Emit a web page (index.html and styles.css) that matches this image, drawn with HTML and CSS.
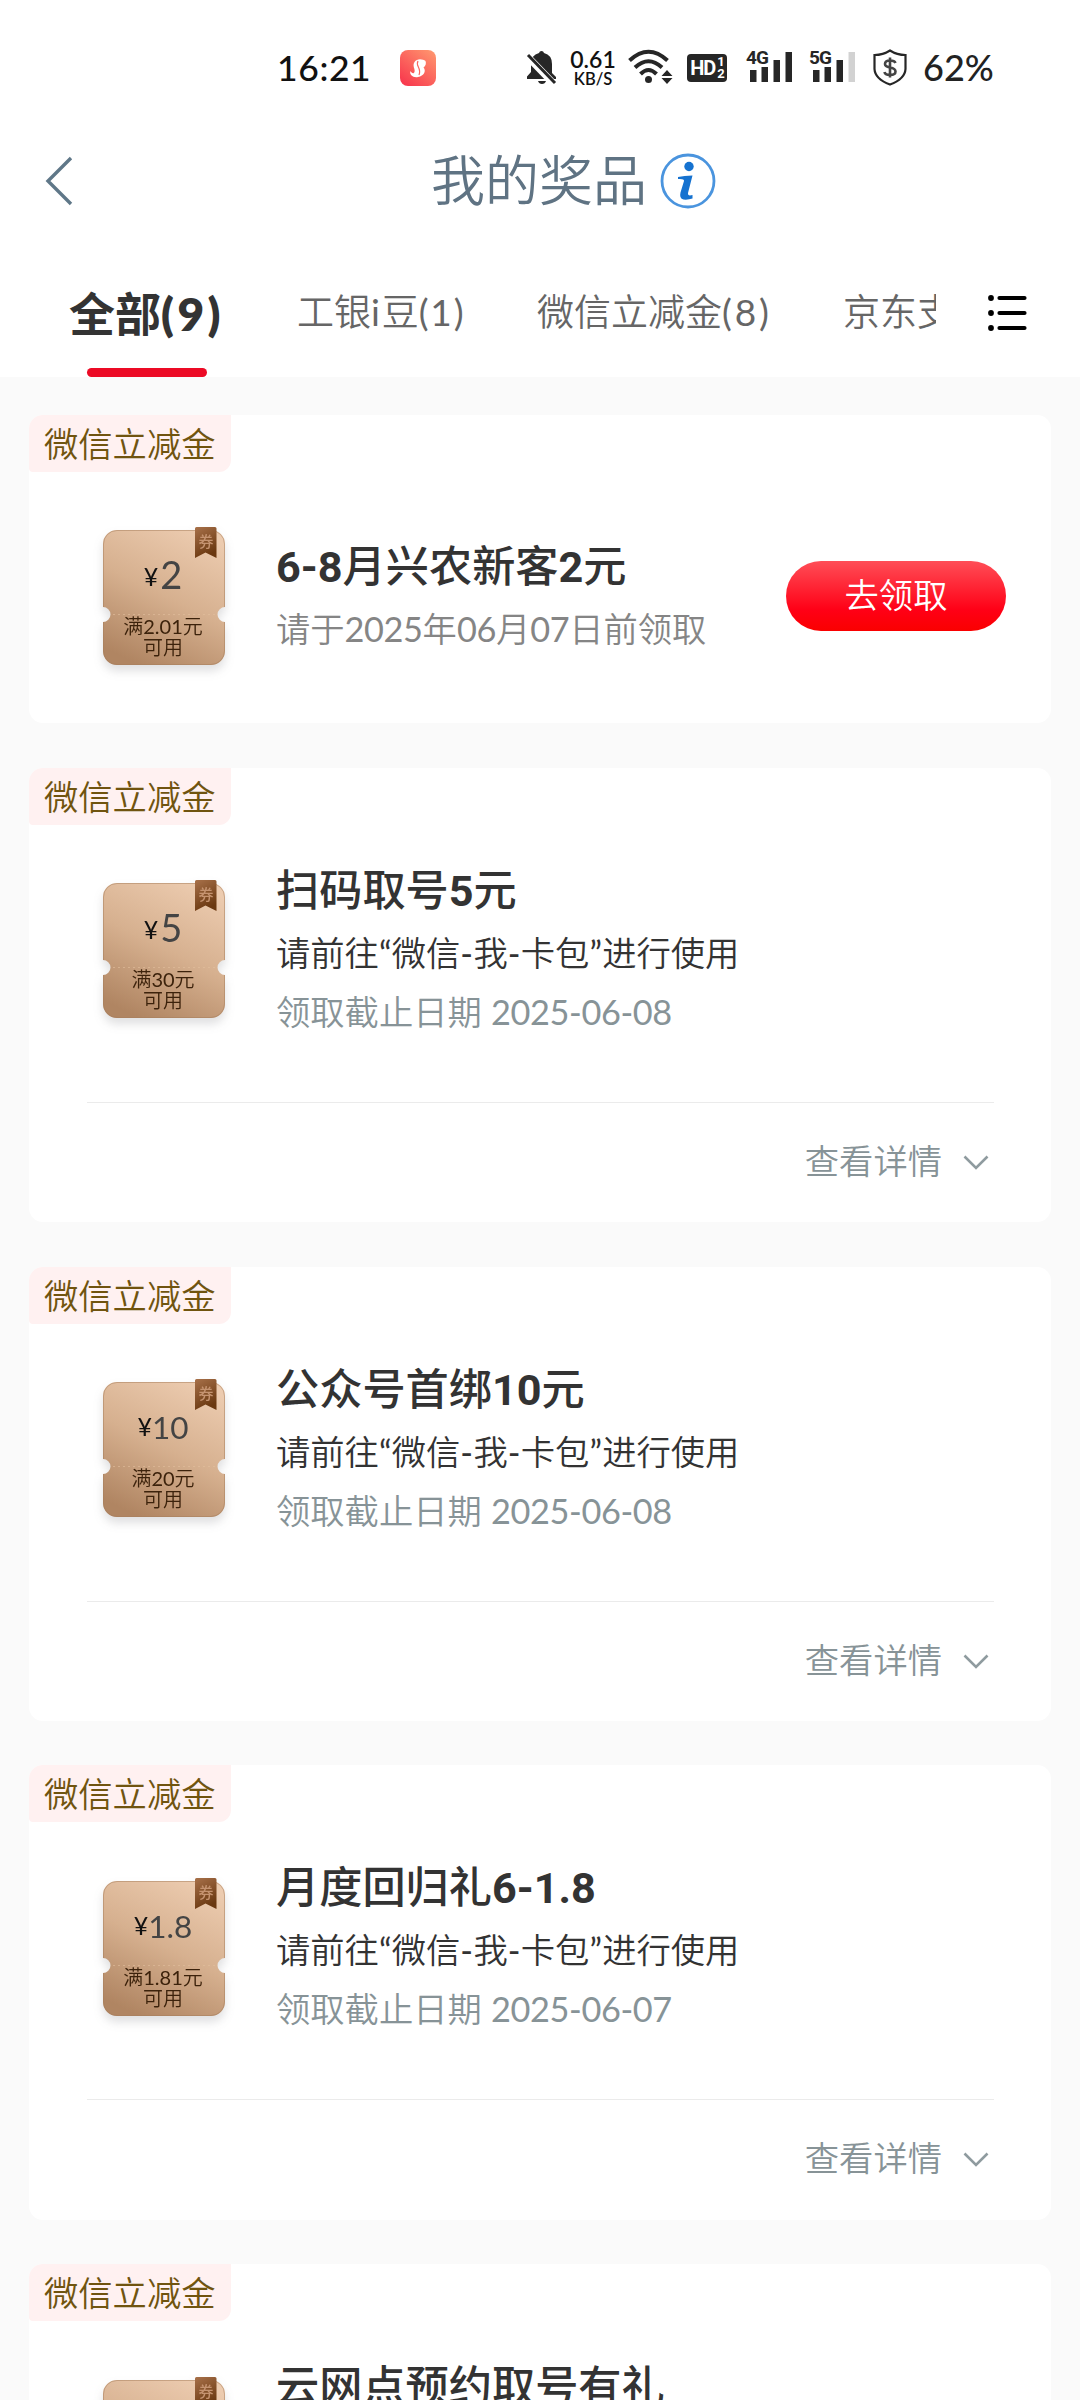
FILE: index.html
```html
<!DOCTYPE html>
<html lang="zh-CN">
<head>
<meta charset="utf-8">
<title>我的奖品</title>
<link rel="stylesheet" href="styles.css">
</head>
<body>
<svg class="defs" width="0" height="0">
  <defs>
    <linearGradient id="gold" x1="0.75" y1="0" x2="0.3" y2="1">
      <stop offset="0" stop-color="#eccbaf"/><stop offset="0.5" stop-color="#d6b08f"/><stop offset="1" stop-color="#b08562"/>
    </linearGradient>
    <linearGradient id="ribbon" x1="0" y1="0" x2="0.4" y2="1">
      <stop offset="0" stop-color="#a8714a"/><stop offset="1" stop-color="#6a3810"/>
    </linearGradient>
    <linearGradient id="app" x1="1" y1="0" x2="0.2" y2="1">
      <stop offset="0" stop-color="#ff9a70"/><stop offset="1" stop-color="#f83a4e"/>
    </linearGradient>
    <symbol id="coupon" viewBox="0 0 122 138">
      <path d="M14 3H108A14 14 0 0 1 122 17V80A7.500 7.500 0 0 0 122 95V124A14 14 0 0 1 108 138H14A14 14 0 0 1 0 124V95A7.500 7.500 0 0 0 0 80V17A14 14 0 0 1 14 3Z" fill="url(#gold)"/>
      <path d="M14 3.500H108A13.500 13.500 0 0 1 121.500 17V80M.5 80V17A13.500 13.500 0 0 1 14 3.500M.5 95V124A13.500 13.500 0 0 0 14 137.500H108A13.500 13.500 0 0 0 121.500 124V95" fill="none" stroke="#a57d5c" stroke-opacity=".5"/>
      <path d="M10 87.500H112" stroke="#e2bf9f" stroke-opacity=".6" stroke-dasharray="2 3"/>
      <path d="M92 1.500Q92 0 93.500 0H112Q113.500 0 113.500 1.500V31L102.500 25.500L92 31Z" fill="url(#ribbon)"/>
    </symbol>
    <symbol id="down" viewBox="0 0 26 16"><path d="M1.500 1.500L13 13L24.500 1.500" fill="none" stroke="#8f9b9f" stroke-width="2.600"/></symbol>
  </defs>
</svg>

<header class="status">
  <span class="clock">16:21</span>
  <svg class="app-icon" width="36" height="36" viewBox="0 0 36 36"><rect width="36" height="36" rx="8" fill="url(#app)"/><path d="M25.500 11C23 9 17 8 14.500 12C12 16 15.500 19 14.500 22C13.500 24.500 11.500 23 10.500 21C9 24.500 13 28 18 27C24 26 26.500 21 23.500 17.500C25.500 16 26.500 13.500 25.500 11Z" fill="#fff"/><path d="M18 11C15 16 22 18 19 25" fill="none" stroke="#f9665f" stroke-width="1.200"/></svg>
  <svg class="bell" width="32" height="35" viewBox="0 0 32 35"><path d="M15.500 1Q17.500 1 18 3Q26 5 26 14V23L30 27V29H1V26.500L5 22V14Q5 5 13 3Q13.500 1 15.500 1ZM12 31H20Q19 34 16 34Q13 34 12 31Z" fill="#262626"/><path d="M-1 4L28 34" stroke="#fff" stroke-width="7"/><path d="M2 5L29 33" stroke="#262626" stroke-width="3"/></svg>
  <span class="speed"><span class="rate">0.61</span><span class="unit">KB/S</span></span>
  <svg class="wifi" width="45" height="36" viewBox="0 0 45 36"><g fill="none" stroke="#262626" stroke-width="4"><path d="M1.500 11.500Q20.500-6 39.500 11.500"/><path d="M7 18.500Q20.500 6 34 18.500"/><path d="M12.500 25Q20.500 17 28.500 25"/></g><circle cx="20.500" cy="30.500" r="3.500" fill="#262626"/><path d="M39 21L44.500 27H33.500ZM39 35L44.500 29H33.500Z" fill="#262626"/></svg>
  <span class="hd"><span>HD</span><span class="hd-n"><i>1</i><i>2</i></span></span>
  <span class="signal"><b>4G</b><svg width="46" height="32" viewBox="0 0 46 32"><path d="M4 20h6.500v12h-6.500zM15.500 17h6.500v15h-6.500zM27.500 10H34v22h-6.500zM39.500 2H46v30h-6.500z" fill="#262626"/></svg></span>
  <span class="signal signal-5g"><b>5G</b><svg width="46" height="32" viewBox="0 0 46 32"><path d="M4 20h6.500v12h-6.500zM15.500 17h6.500v15h-6.500zM27.500 10H34v22h-6.500z" fill="#262626"/><path d="M39.500 2H46v30h-6.500z" fill="#d2d2d2"/></svg></span>
  <svg class="shield" width="34" height="37" viewBox="0 0 34 37"><path d="M17 1.500Q24 6 32.500 6V20Q32 30 17 35.500Q2 30 1.500 20V6Q10 6 17 1.500Z" fill="none" stroke="#262626" stroke-width="2.200"/><path d="M22.500 14Q21.500 11.500 17 11.500Q12 11.500 12 15Q12 17.500 17 18.500Q22.500 19.500 22.500 22.500Q22.500 26 17 26Q12 26 11.500 23M17 8.500V28.500" fill="none" stroke="#444" stroke-width="2.600"/></svg>
  <span class="battery">62%</span>
</header>

<nav class="titlebar">
  <svg class="back" width="28" height="50" viewBox="0 0 28 50"><path d="M26 2L3 25L26 48" fill="none" stroke="#5f7788" stroke-width="3.400"/></svg>
  <h1>我的奖品</h1>
  <svg class="info" width="56" height="56" viewBox="0 0 56 56"><circle cx="28" cy="28" r="26" fill="#fff" stroke="#4a94de" stroke-width="2.800"/><circle cx="29" cy="13.500" r="4.700" fill="#1572d0"/><path d="M18 24Q24 22.500 32.500 22.500L28 40Q27.500 43.500 32.500 42V45.500Q28 47 23.500 46.500Q19 45.500 20.500 39.500L24 28Q24.500 25.500 18 26Z" fill="#1572d0"/></svg>
</nav>

<div class="tabs">
  <div class="tab-strip">
    <span class="tab active">全部<span class="count">(9)</span></span>
    <span class="tab t2">工银<span class="count">i</span>豆<span class="count">(1)</span></span>
    <span class="tab t3">微信立减金<span class="count">(8)</span></span>
    <span class="tab t4">京东支付</span>
  </div>
  <svg class="menu" width="39" height="38" viewBox="0 0 39 38"><g stroke="#000" stroke-width="4.200" stroke-linecap="round"><path d="M11.500 4H36.500M11.500 19H36.500M11.500 34H36.500"/></g><circle cx="3" cy="4" r="2.900"/><circle cx="3" cy="19" r="2.900"/><circle cx="3" cy="34" r="2.900"/></svg>
</div>

<main class="list">
  <article class="card claim">
    <div class="tag">微信立减金</div>
    <div class="body">
      <div class="coupon"><svg><use href="#coupon"/></svg><span class="seal">券</span><p class="amount"><small>¥</small>2</p><p class="rule">满<span class="n">2.01</span>元<br>可用</p></div>
      <div class="text"><h2><b>6-8</b>月兴农新客<b>2</b>元</h2><p class="until">请于<span class="n">2025</span>年<span class="n">06</span>月<span class="n">07</span>日前领取</p></div>
      <span class="button">去领取</span>
    </div>
  </article>

  <article class="card">
    <div class="tag">微信立减金</div>
    <div class="body">
      <div class="coupon"><svg><use href="#coupon"/></svg><span class="seal">券</span><p class="amount"><small>¥</small>5</p><p class="rule">满<span class="n">30</span>元<br>可用</p></div>
      <div class="text"><h2>扫码取号<b>5</b>元</h2><p class="how">请前往<span class="q">“</span>微信<span class="q">-</span>我<span class="q">-</span>卡包<span class="q">”</span>进行使用</p><p class="date">领取截止日期 <span class="n">2025-06-08</span></p></div>
    </div>
    <div class="more">查看详情<svg><use href="#down"/></svg></div>
  </article>

  <article class="card">
    <div class="tag">微信立减金</div>
    <div class="body">
      <div class="coupon"><svg><use href="#coupon"/></svg><span class="seal">券</span><p class="amount long"><small>¥</small>10</p><p class="rule">满<span class="n">20</span>元<br>可用</p></div>
      <div class="text"><h2>公众号首绑<b>10</b>元</h2><p class="how">请前往<span class="q">“</span>微信<span class="q">-</span>我<span class="q">-</span>卡包<span class="q">”</span>进行使用</p><p class="date">领取截止日期 <span class="n">2025-06-08</span></p></div>
    </div>
    <div class="more">查看详情<svg><use href="#down"/></svg></div>
  </article>

  <article class="card">
    <div class="tag">微信立减金</div>
    <div class="body">
      <div class="coupon"><svg><use href="#coupon"/></svg><span class="seal">券</span><p class="amount long"><small>¥</small>1.8</p><p class="rule">满<span class="n">1.81</span>元<br>可用</p></div>
      <div class="text"><h2>月度回归礼<b>6-1.8</b></h2><p class="how">请前往<span class="q">“</span>微信<span class="q">-</span>我<span class="q">-</span>卡包<span class="q">”</span>进行使用</p><p class="date">领取截止日期 <span class="n">2025-06-07</span></p></div>
    </div>
    <div class="more">查看详情<svg><use href="#down"/></svg></div>
  </article>

  <article class="card last">
    <div class="tag">微信立减金</div>
    <div class="body">
      <div class="coupon"><svg><use href="#coupon"/></svg><span class="seal">券</span></div>
      <div class="text"><h2>云网点预约取号有礼</h2></div>
    </div>
  </article>
</main>
</body>
</html>
```
FILE: styles.css
```css
* { box-sizing: border-box; margin: 0; padding: 0; }
html, body { height: 2400px; overflow: hidden; }
body {
  width: 1080px;
  background: #fafafa;
  font-family: Lato, "Noto Sans CJK SC", sans-serif;
  font-weight: 350;
  color: #333;
}
.defs { position: absolute; }
svg { display: block; flex: none; overflow: visible; }

.status { display: flex; height: 136px; padding: 49px 0 0 277px; background: #fff; white-space: nowrap; }
.status > * { flex: none; }
.clock { width: 123px; font: 500 35.500px/38px Lato, sans-serif; letter-spacing: .6px; color: #111; }
.app-icon { margin-top: 1px; }
.bell { margin: 1px 0 0 90px; }
.speed { display: flex; flex-direction: column; align-items: center; width: 48px; margin-left: 11px; color: #111; }
.rate { font: 600 23px/20px Lato, sans-serif; }
.unit { font: 600 16.500px/20px Lato, sans-serif; }
.wifi { margin-left: 11px; }
.hd { display: flex; align-items: center; justify-content: center; width: 40px; height: 28px; margin: 5px 0 0 14px; border-radius: 4px; background: #262626; color: #fff; font: 700 20px/28px "Roboto", sans-serif; letter-spacing: -1px; }
.hd-n { display: flex; flex-direction: column; margin-left: 2px; font-size: 13px; line-height: 12px; }
.hd-n i { font-style: normal; }
.signal { position: relative; width: 46px; height: 33px; margin: 1px 0 0 19px; }
.signal b { position: absolute; left: 0; top: -1px; font: 700 19px/18px "Roboto", sans-serif; letter-spacing: -1px; color: #262626; background: #fff; height: 17px; }
.signal-5g { margin-left: 17px; }
.shield { margin-left: 18px; }
.battery { margin-left: 16px; font: 500 36px/37px Lato, sans-serif; color: #222; }

.titlebar { display: flex; align-items: center; height: 90px; padding-left: 45px; background: #fff; }
.titlebar h1 { margin-left: 358px; font-size: 54px; line-height: 70px; font-weight: 350; color: #5f7383; width: 216px; white-space: nowrap; }
.info { margin-left: 13px; }

.tabs { display: flex; height: 151px; background: #fff; }
.tab-strip { display: flex; flex: none; width: 936px; padding-left: 69px; overflow: hidden; white-space: nowrap; }
.tab { flex: none; height: 151px; font-size: 37px; line-height: 172px; color: #666; }
.count { font-weight: 400; letter-spacing: 1.800px; }
.active { position: relative; width: 228px; font-size: 46px; font-weight: 700; line-height: 176px; color: #333; }
.active .count { font-weight: 800; letter-spacing: 3.500px; }
.active::after { content: ""; position: absolute; left: 18px; bottom: 0; width: 120px; height: 9px; border-radius: 5px; background: #ec0a25; }
.t2 { width: 240px; }
.t3 { width: 306px; }
.t3 .count { letter-spacing: 2.800px; }
.menu { margin: 68px 0 0 52px; }

.list { display: flex; flex-direction: column; gap: 44.500px; padding: 38px 29px 0; }
.card { flex: none; height: 454.300px; border-radius: 14px; background: #fff; overflow: hidden; }
.claim { height: 308.400px; }
.last { height: 136px; border-radius: 14px 14px 0 0; }
.tag { width: 202px; height: 57px; padding-left: 15px; border-radius: 0 0 12px 4px; background: #fff1f1; font-size: 34.300px; line-height: 57px; color: #70540f; }
.body { display: flex; height: 278px; margin: 0 57px 0 58px; padding-left: 16px; border-bottom: 1.500px solid #ebebeb; }
.claim .body { height: 250px; border: 0; }
.coupon { position: relative; flex: none; width: 122px; height: 138px; margin-top: 55.300px; filter: drop-shadow(0 6px 5px rgba(70, 70, 80, .17)); }
.claim .coupon { margin-top: 55px; }
.coupon svg { position: absolute; left: 0; top: 0; width: 122px; height: 138px; }
.seal { position: absolute; left: 93px; top: 5px; width: 20px; text-align: center; font-size: 15px; line-height: 18px; font-weight: 500; color: #c59370; }
.amount { position: relative; left: -1px; padding-top: 24px; height: 89px; text-align: center; font-size: 38px; line-height: 46px; font-weight: 400; color: #444; }
.amount small { margin-right: 2px; font-size: 25px; font-weight: 400; vertical-align: 3px; color: #111; }
.amount.long { font-size: 31.500px; }
.amount.long small { margin-right: 0; }
.rule { position: relative; left: -1px; text-align: center; font-size: 20px; line-height: 21px; color: #3c220b; }
.n { font-weight: 400; letter-spacing: -.4px; }
.rule .n { letter-spacing: 0; }
.q { font-weight: 400; letter-spacing: .3px; }
.text { flex: none; margin-left: 51px; padding-top: 37px; white-space: nowrap; }
.claim .text { padding-top: 66px; }
h2 { font-family: Roboto, "Noto Sans CJK SC", sans-serif; font-size: 43.200px; line-height: 60px; font-weight: 500; }
h2 b { font-weight: 700; }
.text p { font-size: 34.300px; line-height: 61px; }
.text .until { line-height: 61px; color: #858585; }
.text .date { line-height: 57px; color: #879397; }
.button { flex: none; width: 220px; height: 70px; margin: 89px -12px 0 auto; border-radius: 35px; background: linear-gradient(#ff4e57, #ff0016 70%, #fa0000); font-size: 34.300px; line-height: 68px; text-align: center; color: #fff; }
.more { display: flex; align-items: center; justify-content: flex-end; height: 112px; padding-right: 62px; font-size: 34.300px; color: #879397; }
.more svg { width: 26px; height: 16px; margin: 8px 0 0 21px; }
```
